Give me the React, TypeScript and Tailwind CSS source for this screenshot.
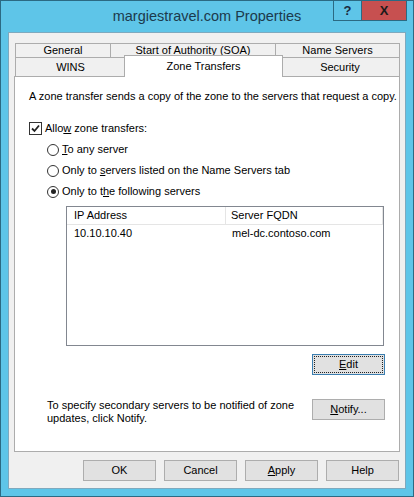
import React from "react";

function Btn({ children, focused }: { children: React.ReactNode; focused?: boolean }) {
  return (
    <div
      className={
        "relative flex h-[21px] w-[73px] items-center justify-center border bg-[#e1e1e1] text-black " +
        (focused ? "border-[#3c7fb1]" : "border-[#adadad]")
      }
    >
      {focused && <div className="absolute inset-[1px] border border-dotted border-[#222]" />}
      <span>{children}</span>
    </div>
  );
}

function Radio({ checked, children }: { checked?: boolean; children: React.ReactNode }) {
  return (
    <div className="flex h-[13px] items-center">
      <div className="flex h-[12px] w-[12px] items-center justify-center rounded-full border border-[#333] bg-white">
        {checked && <div className="h-[5px] w-[5px] rounded-full bg-[#222]" />}
      </div>
      <span className="ml-[3px]">{children}</span>
    </div>
  );
}

function Tab({ w, children, first }: { w: string; children: React.ReactNode; first?: boolean }) {
  return (
    <div
      className={
        "flex items-center justify-center border-l border-r border-t border-[#acacac] bg-[#f0f0f0] " +
        w +
        (first ? "" : " -ml-px")
      }
    >
      {children}
    </div>
  );
}

export default function App() {
  return (
    <div className="flex h-[497px] w-[414px] flex-col border border-[#2b6a83] bg-[#5ec5e8] px-[7px] pb-[7px] font-['Liberation_Sans',Arial,sans-serif] text-[11px] leading-[13px] text-black">
      {/* Title bar */}
      <div className="relative h-[31px] shrink-0">
        <div className="flex h-[30px] items-center justify-center text-[14.5px] text-[#1c3a4c]">
          margiestravel.com Properties
        </div>
        <div className="absolute right-[-1px] top-[-1px] flex">
          <div className="flex h-[21px] w-[29px] items-center justify-center border border-[#2b6a83] text-[13px] font-bold text-[#1a2a40]">
            ?
          </div>
          <div className="-ml-px flex h-[21px] w-[46px] items-center justify-center border border-[#2b6a83] bg-[#c75050] text-[13px] font-bold text-[#1a1a1a]">
            X
          </div>
        </div>
      </div>

      {/* Client area */}
      <div className="flex flex-1 flex-col border border-[#7ea9be] bg-[#f0f0f0]">
        {/* Tabs */}
        <div className="ml-[6px] mt-[10px] flex h-[14px]">
          <Tab w="w-[96px]" first>
            General
          </Tab>
          <Tab w="w-[166px]">Start of Authority (SOA)</Tab>
          <Tab w="w-[125px]">Name Servers</Tab>
        </div>
        <div className="ml-[6px] flex h-[19px] items-start">
          <Tab w="w-[111px] h-[19px]" first>
            WINS
          </Tab>
          <div className="relative z-10 -ml-[2px] -mr-[2px] -mt-[2px] flex h-[22px] w-[159px] items-start justify-center border-l border-r border-t border-[#acacac] bg-white pt-[4px]">
            Zone Transfers
          </div>
          <Tab w="w-[120px] h-[19px]">Security</Tab>
        </div>

        {/* Panel */}
        <div className="ml-[5px] flex h-[376px] w-[386px] flex-col border border-[#acacac] bg-white pl-[14px]">
          <div className="mt-[13px] whitespace-nowrap">
            A zone transfer sends a copy of the zone to the servers that request a copy.
          </div>
          <div className="mt-[19px] flex h-[13px] items-center">
            <div className="flex h-[13px] w-[13px] items-center justify-center border border-[#333] bg-white">
              <svg width="11" height="11" viewBox="0 0 11 11">
                <path d="M2 5.5 L4.5 8 L9 2.5" fill="none" stroke="#222" strokeWidth="1.8" />
              </svg>
            </div>
            <span className="ml-[3px]">
              Allo<u>w</u> zone transfers:
            </span>
          </div>
          <div className="ml-[18px] mt-[8px] flex flex-col gap-[8px]">
            <Radio>
              <u>T</u>o any server
            </Radio>
            <Radio>
              Only to <u>s</u>ervers listed on the Name Servers tab
            </Radio>
            <Radio checked>
              Only to t<u>h</u>e following servers
            </Radio>
          </div>

          {/* List */}
          <div className="ml-[37px] mt-[8px] flex h-[140px] w-[318px] flex-col border border-[#828790] bg-white">
            <div className="flex h-[18px] border-b border-[#e5e5e5]">
              <div className="flex w-[159px] items-center border-r border-[#e5e5e5] pl-[7px]">IP Address</div>
              <div className="flex flex-1 items-center border-r border-[#e5e5e5] pl-[5px]">Server FQDN</div>
            </div>
            <div className="flex h-[17px] items-center">
              <div className="w-[159px] pl-[7px]">10.10.10.40</div>
              <div className="pl-[6px]">mel-dc.contoso.com</div>
            </div>
          </div>

          <div className="ml-[283px] mt-[8px]">
            <Btn focused>
              <u>E</u>dit
            </Btn>
          </div>

          <div className="mt-[24px] flex items-start">
            <div className="ml-[18px] w-[250px]">
              To specify secondary servers to be notified of zone
              <br />
              updates, click Notify.
            </div>
            <div className="ml-[15px]">
              <Btn>
                <u>N</u>otify...
              </Btn>
            </div>
          </div>
        </div>

        {/* Bottom buttons */}
        <div className="mt-[8px] flex justify-end gap-[8px] pr-[6px]">
          <Btn>OK</Btn>
          <Btn>Cancel</Btn>
          <Btn>
            <u>A</u>pply
          </Btn>
          <Btn>Help</Btn>
        </div>
      </div>
    </div>
  );
}
